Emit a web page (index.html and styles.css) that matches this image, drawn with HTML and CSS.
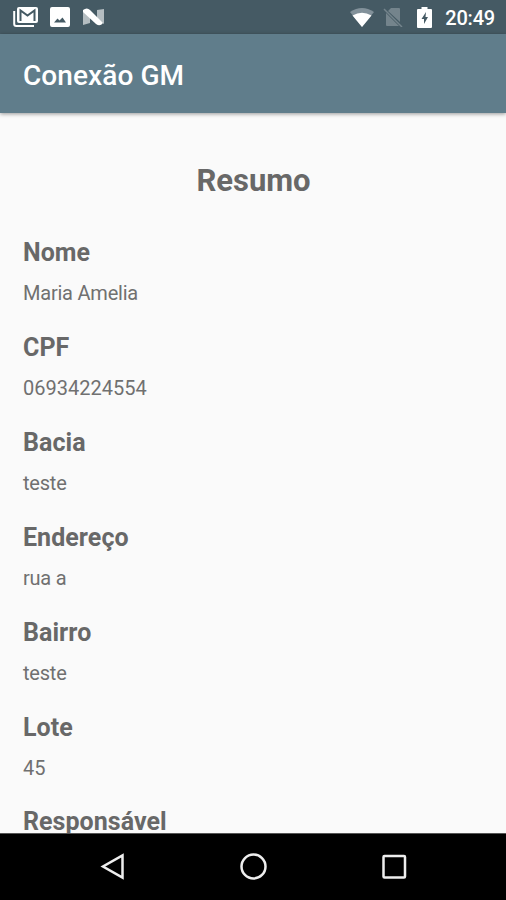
FILE: index.html
```html
<!DOCTYPE html>
<html lang="pt-BR">
<head>
<meta charset="utf-8">
<title>Conexão GM</title>
<link rel="stylesheet" href="styles.css">
</head>
<body>
<div class="screen">
  <header class="status">
    <svg class="icon gmail" width="26" height="22" viewBox="0 0 26 22"><path fill="none" stroke="currentColor" stroke-width="2" d="M1.200 5v13q0 2 2 2H21"/><rect x="4" y="1" width="21" height="16" rx="2" fill="currentColor"/><path fill="none" stroke="#455a64" stroke-width="2" d="M7.500 15V4.500l7 5 7-5V15"/></svg>
    <svg class="icon photo" width="20" height="20" viewBox="0 0 20 20"><path fill="currentColor" fill-rule="evenodd" d="M2 0h16q2 0 2 2v16q0 2-2 2H2q-2 0-2-2V2q0-2 2-2zM4 15.500h12l-3.500-5L9.500 13.500l-2-2z"/></svg>
    <svg class="icon nougat" width="21" height="18" viewBox="0 0 21 18"><path fill="#b4bdc1" d="M0 2l7 5v8l-7 2zM14 2l7-1v15l-7-5z"/><path fill="currentColor" d="M0 2q4-3 7 0l13 13q-3 4-7 1L0 4z"/></svg>
    <span class="spacer"></span>
    <svg class="icon wifi" width="24" height="19" viewBox="0 0 24 19"><path fill="#82919a" d="M12 19L0 4Q12-4 24 4z"/><path fill="currentColor" d="M12 19L2.500 7.500Q12 2 21.500 7.500z"/></svg>
    <svg class="icon sim" width="20" height="20" viewBox="0 0 20 20"><path fill="currentColor" d="M8 1h8q1 0 1 1v13L5 4zM3 6l13 13H4q-1 0-1-1z"/><path stroke="currentColor" stroke-width="1.500" d="M1 2l18 18"/></svg>
    <svg class="icon battery" width="15" height="21" viewBox="0 0 15 21"><path fill="currentColor" fill-rule="evenodd" d="M4.500 0h6v2h3.500q1 0 1 1v17q0 1-1 1H1q-1 0-1-1V3q0-1 1-1h3.500zM9 5l-4.500 7H7v5l4-7H8.500z"/></svg>
    <time>20:49</time>
  </header>
  <div class="appbar">Conexão GM</div>
  <main>
    <h1>Resumo</h1>
    <dl>
      <dt>Nome</dt><dd>Maria Amelia</dd>
      <dt>CPF</dt><dd class="number">06934224554</dd>
      <dt>Bacia</dt><dd>teste</dd>
      <dt>Endereço</dt><dd>rua a</dd>
      <dt>Bairro</dt><dd>teste</dd>
      <dt>Lote</dt><dd class="number">45</dd>
      <dt>Responsável</dt>
    </dl>
  </main>
  <nav>
    <svg width="28" height="30" viewBox="0 0 28 30"><path d="M22.500 3.500v22L3 14.500z"/></svg>
    <svg width="28" height="30" viewBox="0 0 28 30"><circle cx="13.500" cy="14.500" r="12"/></svg>
    <svg width="28" height="30" viewBox="0 0 28 30"><rect x="3.500" y="4" width="21.500" height="21.500" rx="1"/></svg>
  </nav>
</div>
</body>
</html>
```
FILE: styles.css
```css
* { box-sizing: border-box; }
body { margin: 0; font-family: Roboto, sans-serif; background: #fafafa; }
.screen { width: 506px; height: 900px; display: flex; flex-direction: column; overflow: hidden; }
.status { height: 34px; flex: none; display: flex; align-items: center; padding: 0 11px 0 13px; background: #455a64; color: #fff; }
.icon { display: block; flex: none; }
.gmail { margin-top: -1px; }
.photo { margin-left: 11px; }
.nougat { margin-left: 13px; }
.spacer { flex: 1; }
.sim { margin-left: 9px; color: #74848c; }
.battery { margin-left: 14px; }
time { margin-left: 13px; font-size: 20px; line-height: 36px; font-weight: 500; letter-spacing: -0.2px; padding-top: 2px; }
.appbar { height: 79px; flex: none; padding-left: 23px; background: #607d8b; color: #fff; font-size: 28px; font-weight: 500; line-height: 83px; letter-spacing: 0.08px; box-shadow: 0 1px 4px #0006; position: relative; }
main { flex: 1; min-height: 0; overflow: hidden; padding: 48px 22px 0 23px; color: #686868; }
h1 { margin: 0; text-align: center; font-size: 31px; line-height: 40px; font-weight: 700; }
dl { margin: 35px 0 0; }
dt { font-size: 25px; line-height: 34px; font-weight: 700; letter-spacing: 0.05px; }
dt:last-child { margin-top: -1px; }
dd { margin: 8px 0 23px; font-size: 20px; line-height: 30px; color: #707070; letter-spacing: -0.22px; }
.number { letter-spacing: 0; }
nav { height: 67px; flex: none; display: flex; justify-content: center; align-items: center; gap: 112px; padding-left: 1px; background: #000; border-top: 1px solid #555; }
nav svg { fill: none; stroke: #eee; stroke-width: 2.500; }
```
